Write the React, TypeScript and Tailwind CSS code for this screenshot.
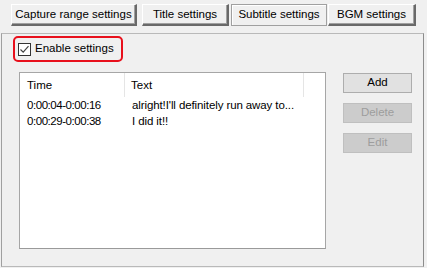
import { clsx } from 'clsx';

const tabs = [
  { label: 'Capture range settings', w: 'w-[126px]', ml: 'ml-0', active: false },
  { label: 'Title settings', w: 'w-[87px]', ml: 'ml-[5px]', active: false },
  { label: 'Subtitle settings', w: 'w-[96px]', ml: 'ml-[2px]', active: true },
  { label: 'BGM settings', w: 'w-[88px]', ml: 'ml-[1px]', active: false },
];

const rows = [
  { time: '0:00:04-0:00:16', text: 'alright!I\'ll definitely run away to...' },
  { time: '0:00:29-0:00:38', text: 'I did it!!' },
];

function Tab({ label, w, ml, active }: { label: string; w: string; ml: string; active: boolean }) {
  return (
    <div
      className={clsx(
        'h-[22px] flex items-center justify-center text-black bg-[#f0f0f0]',
        w,
        ml,
        active
          ? 'border border-[#a0a0a0] shadow-[inset_1px_1px_0_#ffffff]'
          : 'border-t border-l border-t-white border-l-white border-r-2 border-b-2 border-r-[#696969] border-b-[#696969] shadow-[inset_-1px_-1px_0_#a0a0a0]'
      )}
    >
      {label}
    </div>
  );
}

function ActionButton({ label, disabled }: { label: string; disabled?: boolean }) {
  return (
    <div
      className={clsx(
        'h-[20px] w-[69px] flex items-center justify-center border',
        disabled
          ? 'bg-[#cccccc] border-[#bfbfbf] text-[#9d9d9d]'
          : 'bg-[#e1e1e1] border-[#adadad] text-black'
      )}
    >
      {label}
    </div>
  );
}

export default function App() {
  return (
    <div className="w-[427px] h-[268px] bg-[#f0f0f0] overflow-hidden text-[11.5px] leading-none font-['Liberation_Sans',Arial,sans-serif]">
      {/* Tab strip */}
      <div className="flex pt-[4px] pl-[11px]">
        {tabs.map((t) => (
          <Tab key={t.label} {...t} />
        ))}
      </div>

      {/* Panel */}
      <div className="mt-[7px] ml-[1px] w-[423px] h-[234px] border border-[#b9b9b9] border-l-[#a0a0a0] border-r-[#8c8c8c]">
        {/* Enable checkbox */}
        <div className="ml-[11px] mt-[2px] w-[110px] h-[26px] rounded-[5px] border-2 border-[#e8101c] flex items-center pl-[3px]">
          <div className="w-[13px] h-[13px] border border-[#333333] bg-white flex items-center justify-center">
            <svg width="11" height="11" viewBox="0 0 11 11">
              <path d="M1.5 5.5 L4.2 8.2 L9.5 2.2" fill="none" stroke="#444444" strokeWidth="1.2" />
            </svg>
          </div>
          <span className="ml-[4px] text-black">Enable settings</span>
        </div>

        <div className="flex mt-[10px] ml-[17px]">
          {/* List view */}
          <div className="w-[307px] h-[177px] bg-white border border-[#a6a6a6] border-b-[#9a9a9a]">
            <div className="flex h-[25px] text-black">
              <div className="w-[105px] h-[24px] border-r border-[#e5e5e5] flex items-center pl-[7px] pt-[2px]">Time</div>
              <div className="w-[179px] h-[24px] border-r border-[#e5e5e5] flex items-center pl-[6px] pt-[2px]">Text</div>
            </div>
            {rows.map((r) => (
              <div key={r.time} className="flex h-[16px] items-center text-black">
                <div className="w-[106px] pl-[7px] tracking-[-0.45px]">{r.time}</div>
                <div className="pl-[6px] tracking-[-0.1px] whitespace-nowrap">{r.text}</div>
              </div>
            ))}
          </div>

          {/* Buttons */}
          <div className="ml-[17px] mt-[1px] flex flex-col gap-[10px]">
            <ActionButton label="Add" />
            <ActionButton label="Delete" disabled />
            <ActionButton label="Edit" disabled />
          </div>
        </div>
      </div>
    </div>
  );
}
